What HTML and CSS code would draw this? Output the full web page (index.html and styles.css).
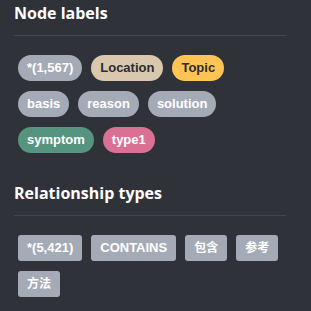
FILE: index.html
```html
<!DOCTYPE html>
<html lang="en">
<head>
    <meta charset="UTF-8">
    <title>Database information</title>
    <link rel="stylesheet" href="styles.css">
</head>
<body>
    <div class="drawer">
        <section class="drawerSection">
            <h4 class="drawerTitle">Node labels</h4>
            <div class="tagList">
                <span class="tag label grey">*(1,567)</span>
                <span class="tag label beige">Location</span>
                <span class="tag label yellow">Topic</span>
                <span class="tag label grey">basis</span>
                <span class="tag label grey">reason</span>
                <span class="tag label grey">solution</span>
                <span class="tag label green">symptom</span>
                <span class="tag label pink">type1</span>
            </div>
        </section>

        <section class="drawerSection">
            <h4 class="drawerTitle">Relationship types</h4>
            <div class="tagList">
                <span class="tag rel">*(5,421)</span>
                <span class="tag rel">CONTAINS</span>
                <span class="tag rel cjk">包含</span>
                <span class="tag rel cjk">参考</span>
                <span class="tag rel cjk">方法</span>
            </div>
        </section>
    </div>
</body>
</html>
```

FILE: styles.css
```css
body {
    margin: 0;
    background-color: #2f3239;
    color: #ffffff;
    font-family: "Open Sans", sans-serif;
}

.drawer {
    padding: 2px 25px 0 14px;
}

.drawerSection {
    margin-bottom: 29px;
}

.drawerTitle {
    margin: 0;
    font-size: 16px;
    font-weight: 700;
    line-height: 22px;
    padding-bottom: 11px;
    border-bottom: 1px solid #42464f;
}

.tagList {
    display: flex;
    flex-wrap: wrap;
    gap: 10px 9px;
    padding: 19px 0 0 4px;
    margin-right: 3px;
}

.tag {
    display: inline-block;
    height: 26px;
    line-height: 26px;
    padding: 0 9px;
    font-family: "Liberation Sans", "Noto Sans CJK SC", sans-serif;
    font-size: 13px;
    font-weight: 700;
    color: #ffffff;
    box-sizing: border-box;
}

.label {
    border-radius: 13px;
}

.rel {
    border-radius: 3px;
    background-color: #a5abb6;
}

.cjk {
    font-size: 12px;
}

.grey {
    background-color: #a5abb6;
}

.beige {
    background-color: #d9c8ae;
    color: #2a2c34;
}

.yellow {
    background-color: #ffc454;
    color: #2a2c34;
}

.green {
    background-color: #569480;
}

.pink {
    background-color: #da7194;
}
```
